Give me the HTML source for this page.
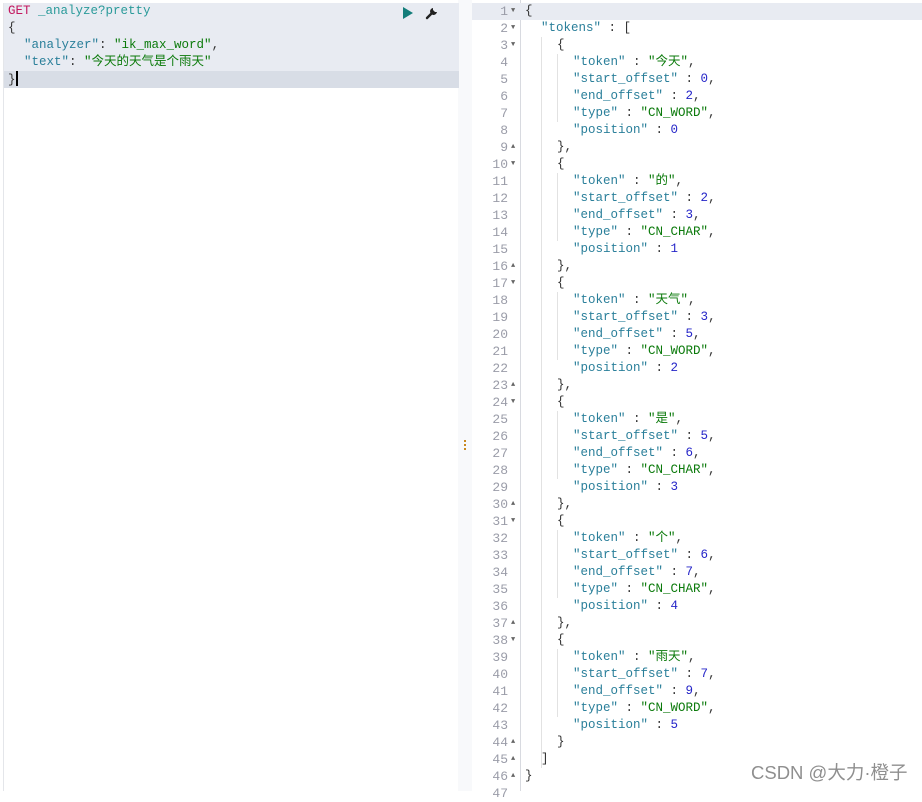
<!DOCTYPE html>
<html><head><meta charset="utf-8"><style>
body{margin:0;width:922px;height:791px;background:#fff;overflow:hidden;position:relative;font-family:"Liberation Mono","Noto Sans CJK SC",monospace;font-size:12.5px;}
.l{position:absolute;height:17px;line-height:17px;white-space:pre;}
.k{color:#2a7f9a}.s{color:#0b7a0b}.n{color:#2525c8}.p{color:#333}.g{color:#c3185f}.u{color:#2a9a9a}
#left{position:absolute;left:3px;top:3px;width:455px;height:788px;border-left:1px solid #e4e6ea;}
#gut{position:absolute;left:458px;top:0;width:14px;height:791px;background:#f8f9fb;}
#rg{position:absolute;left:472px;top:0;width:48px;height:791px;background:#fff;border-right:1px solid #d8dae0;}
.ln{position:absolute;left:472px;width:36px;text-align:right;color:#9a9ca8;height:17px;line-height:17px;font-size:13px;}
.ar{position:absolute;left:511px;color:#666;font-size:7px;height:17px;line-height:17px;}
.c{position:absolute;left:525px;}
.i1{left:541px}.i2{left:557px}.i3{left:573px}
.gd{position:absolute;width:1px;background:#e2e2e2;}
</style></head><body>
<div id="gut"></div><div id="rg"></div>
<div id="left">
<div style="position:absolute;left:0;top:0;width:455px;height:68px;background:#e8ebf2"></div>
<div style="position:absolute;left:0;top:68px;width:455px;height:17px;background:#d8dde6"></div>
<div class="l" style="left:4px;top:0"><span class="g">GET</span> <span class="u">_analyze?pretty</span></div>
<div class="l p" style="left:4px;top:17px">{</div>
<div class="l" style="left:20px;top:34px"><span class="k">"analyzer"</span><span class="p">: </span><span class="s">"ik_max_word"</span><span class="p">,</span></div>
<div class="l" style="left:20px;top:51px"><span class="k">"text"</span><span class="p">: </span><span class="s">"今天的天气是个雨天"</span></div>
<div class="l p" style="left:4px;top:68px">}<span style="display:inline-block;width:2px;height:15px;background:#000;vertical-align:-3px"></span></div>
<svg style="position:absolute;left:398px;top:4px" width="12" height="12"><path d="M1 0 L11 6 L1 12Z" fill="#137d7a"/></svg>
<svg style="position:absolute;left:421px;top:3px" width="14" height="14" viewBox="0 0 14 14"><path d="M2 12 L7 7" stroke="#222" stroke-width="2.4" stroke-linecap="round"/><path d="M8 2 A3.5 3.5 0 1 0 12 6 L10 6 L8 4Z" fill="#222"/></svg>
</div>
<div style="position:absolute;left:464px;top:440px;width:2px;height:2px;background:#c9891f;box-shadow:0 4px 0 #c9891f,0 8px 0 #c9891f"></div>
<div style="position:absolute;left:472px;top:3px;width:450px;height:17px;background:#e8ebf2"></div>
<div class="gd" style="left:541px;top:37px;height:731px"></div>
<div class="gd" style="left:557px;top:54px;height:68px"></div>
<div class="gd" style="left:557px;top:173px;height:68px"></div>
<div class="gd" style="left:557px;top:292px;height:68px"></div>
<div class="gd" style="left:557px;top:411px;height:68px"></div>
<div class="gd" style="left:557px;top:530px;height:68px"></div>
<div class="gd" style="left:557px;top:649px;height:68px"></div>

<div class="ln" style="top:3px">1</div><div class="ar" style="top:3px">▼</div><div class="l c p" style="top:3px">{</div>
<div class="ln" style="top:20px">2</div><div class="ar" style="top:20px">▼</div><div class="l c i1" style="top:20px"><span class="k">"tokens"</span><span class="p"> : [</span></div>
<div class="ln" style="top:37px">3</div><div class="ar" style="top:37px">▼</div><div class="l c i2 p" style="top:37px">{</div>
<div class="ln" style="top:54px">4</div><div class="l c i3" style="top:54px"><span class="k">"token"</span><span class="p"> : </span><span class="s">"今天"</span><span class="p">,</span></div>
<div class="ln" style="top:71px">5</div><div class="l c i3" style="top:71px"><span class="k">"start_offset"</span><span class="p"> : </span><span class="n">0</span><span class="p">,</span></div>
<div class="ln" style="top:88px">6</div><div class="l c i3" style="top:88px"><span class="k">"end_offset"</span><span class="p"> : </span><span class="n">2</span><span class="p">,</span></div>
<div class="ln" style="top:105px">7</div><div class="l c i3" style="top:105px"><span class="k">"type"</span><span class="p"> : </span><span class="s">"CN_WORD"</span><span class="p">,</span></div>
<div class="ln" style="top:122px">8</div><div class="l c i3" style="top:122px"><span class="k">"position"</span><span class="p"> : </span><span class="n">0</span></div>
<div class="ln" style="top:139px">9</div><div class="ar" style="top:139px">▲</div><div class="l c i2 p" style="top:139px">},</div>
<div class="ln" style="top:156px">10</div><div class="ar" style="top:156px">▼</div><div class="l c i2 p" style="top:156px">{</div>
<div class="ln" style="top:173px">11</div><div class="l c i3" style="top:173px"><span class="k">"token"</span><span class="p"> : </span><span class="s">"的"</span><span class="p">,</span></div>
<div class="ln" style="top:190px">12</div><div class="l c i3" style="top:190px"><span class="k">"start_offset"</span><span class="p"> : </span><span class="n">2</span><span class="p">,</span></div>
<div class="ln" style="top:207px">13</div><div class="l c i3" style="top:207px"><span class="k">"end_offset"</span><span class="p"> : </span><span class="n">3</span><span class="p">,</span></div>
<div class="ln" style="top:224px">14</div><div class="l c i3" style="top:224px"><span class="k">"type"</span><span class="p"> : </span><span class="s">"CN_CHAR"</span><span class="p">,</span></div>
<div class="ln" style="top:241px">15</div><div class="l c i3" style="top:241px"><span class="k">"position"</span><span class="p"> : </span><span class="n">1</span></div>
<div class="ln" style="top:258px">16</div><div class="ar" style="top:258px">▲</div><div class="l c i2 p" style="top:258px">},</div>
<div class="ln" style="top:275px">17</div><div class="ar" style="top:275px">▼</div><div class="l c i2 p" style="top:275px">{</div>
<div class="ln" style="top:292px">18</div><div class="l c i3" style="top:292px"><span class="k">"token"</span><span class="p"> : </span><span class="s">"天气"</span><span class="p">,</span></div>
<div class="ln" style="top:309px">19</div><div class="l c i3" style="top:309px"><span class="k">"start_offset"</span><span class="p"> : </span><span class="n">3</span><span class="p">,</span></div>
<div class="ln" style="top:326px">20</div><div class="l c i3" style="top:326px"><span class="k">"end_offset"</span><span class="p"> : </span><span class="n">5</span><span class="p">,</span></div>
<div class="ln" style="top:343px">21</div><div class="l c i3" style="top:343px"><span class="k">"type"</span><span class="p"> : </span><span class="s">"CN_WORD"</span><span class="p">,</span></div>
<div class="ln" style="top:360px">22</div><div class="l c i3" style="top:360px"><span class="k">"position"</span><span class="p"> : </span><span class="n">2</span></div>
<div class="ln" style="top:377px">23</div><div class="ar" style="top:377px">▲</div><div class="l c i2 p" style="top:377px">},</div>
<div class="ln" style="top:394px">24</div><div class="ar" style="top:394px">▼</div><div class="l c i2 p" style="top:394px">{</div>
<div class="ln" style="top:411px">25</div><div class="l c i3" style="top:411px"><span class="k">"token"</span><span class="p"> : </span><span class="s">"是"</span><span class="p">,</span></div>
<div class="ln" style="top:428px">26</div><div class="l c i3" style="top:428px"><span class="k">"start_offset"</span><span class="p"> : </span><span class="n">5</span><span class="p">,</span></div>
<div class="ln" style="top:445px">27</div><div class="l c i3" style="top:445px"><span class="k">"end_offset"</span><span class="p"> : </span><span class="n">6</span><span class="p">,</span></div>
<div class="ln" style="top:462px">28</div><div class="l c i3" style="top:462px"><span class="k">"type"</span><span class="p"> : </span><span class="s">"CN_CHAR"</span><span class="p">,</span></div>
<div class="ln" style="top:479px">29</div><div class="l c i3" style="top:479px"><span class="k">"position"</span><span class="p"> : </span><span class="n">3</span></div>
<div class="ln" style="top:496px">30</div><div class="ar" style="top:496px">▲</div><div class="l c i2 p" style="top:496px">},</div>
<div class="ln" style="top:513px">31</div><div class="ar" style="top:513px">▼</div><div class="l c i2 p" style="top:513px">{</div>
<div class="ln" style="top:530px">32</div><div class="l c i3" style="top:530px"><span class="k">"token"</span><span class="p"> : </span><span class="s">"个"</span><span class="p">,</span></div>
<div class="ln" style="top:547px">33</div><div class="l c i3" style="top:547px"><span class="k">"start_offset"</span><span class="p"> : </span><span class="n">6</span><span class="p">,</span></div>
<div class="ln" style="top:564px">34</div><div class="l c i3" style="top:564px"><span class="k">"end_offset"</span><span class="p"> : </span><span class="n">7</span><span class="p">,</span></div>
<div class="ln" style="top:581px">35</div><div class="l c i3" style="top:581px"><span class="k">"type"</span><span class="p"> : </span><span class="s">"CN_CHAR"</span><span class="p">,</span></div>
<div class="ln" style="top:598px">36</div><div class="l c i3" style="top:598px"><span class="k">"position"</span><span class="p"> : </span><span class="n">4</span></div>
<div class="ln" style="top:615px">37</div><div class="ar" style="top:615px">▲</div><div class="l c i2 p" style="top:615px">},</div>
<div class="ln" style="top:632px">38</div><div class="ar" style="top:632px">▼</div><div class="l c i2 p" style="top:632px">{</div>
<div class="ln" style="top:649px">39</div><div class="l c i3" style="top:649px"><span class="k">"token"</span><span class="p"> : </span><span class="s">"雨天"</span><span class="p">,</span></div>
<div class="ln" style="top:666px">40</div><div class="l c i3" style="top:666px"><span class="k">"start_offset"</span><span class="p"> : </span><span class="n">7</span><span class="p">,</span></div>
<div class="ln" style="top:683px">41</div><div class="l c i3" style="top:683px"><span class="k">"end_offset"</span><span class="p"> : </span><span class="n">9</span><span class="p">,</span></div>
<div class="ln" style="top:700px">42</div><div class="l c i3" style="top:700px"><span class="k">"type"</span><span class="p"> : </span><span class="s">"CN_WORD"</span><span class="p">,</span></div>
<div class="ln" style="top:717px">43</div><div class="l c i3" style="top:717px"><span class="k">"position"</span><span class="p"> : </span><span class="n">5</span></div>
<div class="ln" style="top:734px">44</div><div class="ar" style="top:734px">▲</div><div class="l c i2 p" style="top:734px">}</div>
<div class="ln" style="top:751px">45</div><div class="ar" style="top:751px">▲</div><div class="l c i1 p" style="top:751px">]</div>
<div class="ln" style="top:768px">46</div><div class="ar" style="top:768px">▲</div><div class="l c p" style="top:768px">}</div>
<div class="ln" style="top:785px">47</div>
<div style="position:absolute;left:751px;top:759px;font-family:'Liberation Sans','Noto Sans CJK SC',sans-serif;font-size:18.5px;color:#8f8f8f;">CSDN @大力·橙子</div>
</body></html>
